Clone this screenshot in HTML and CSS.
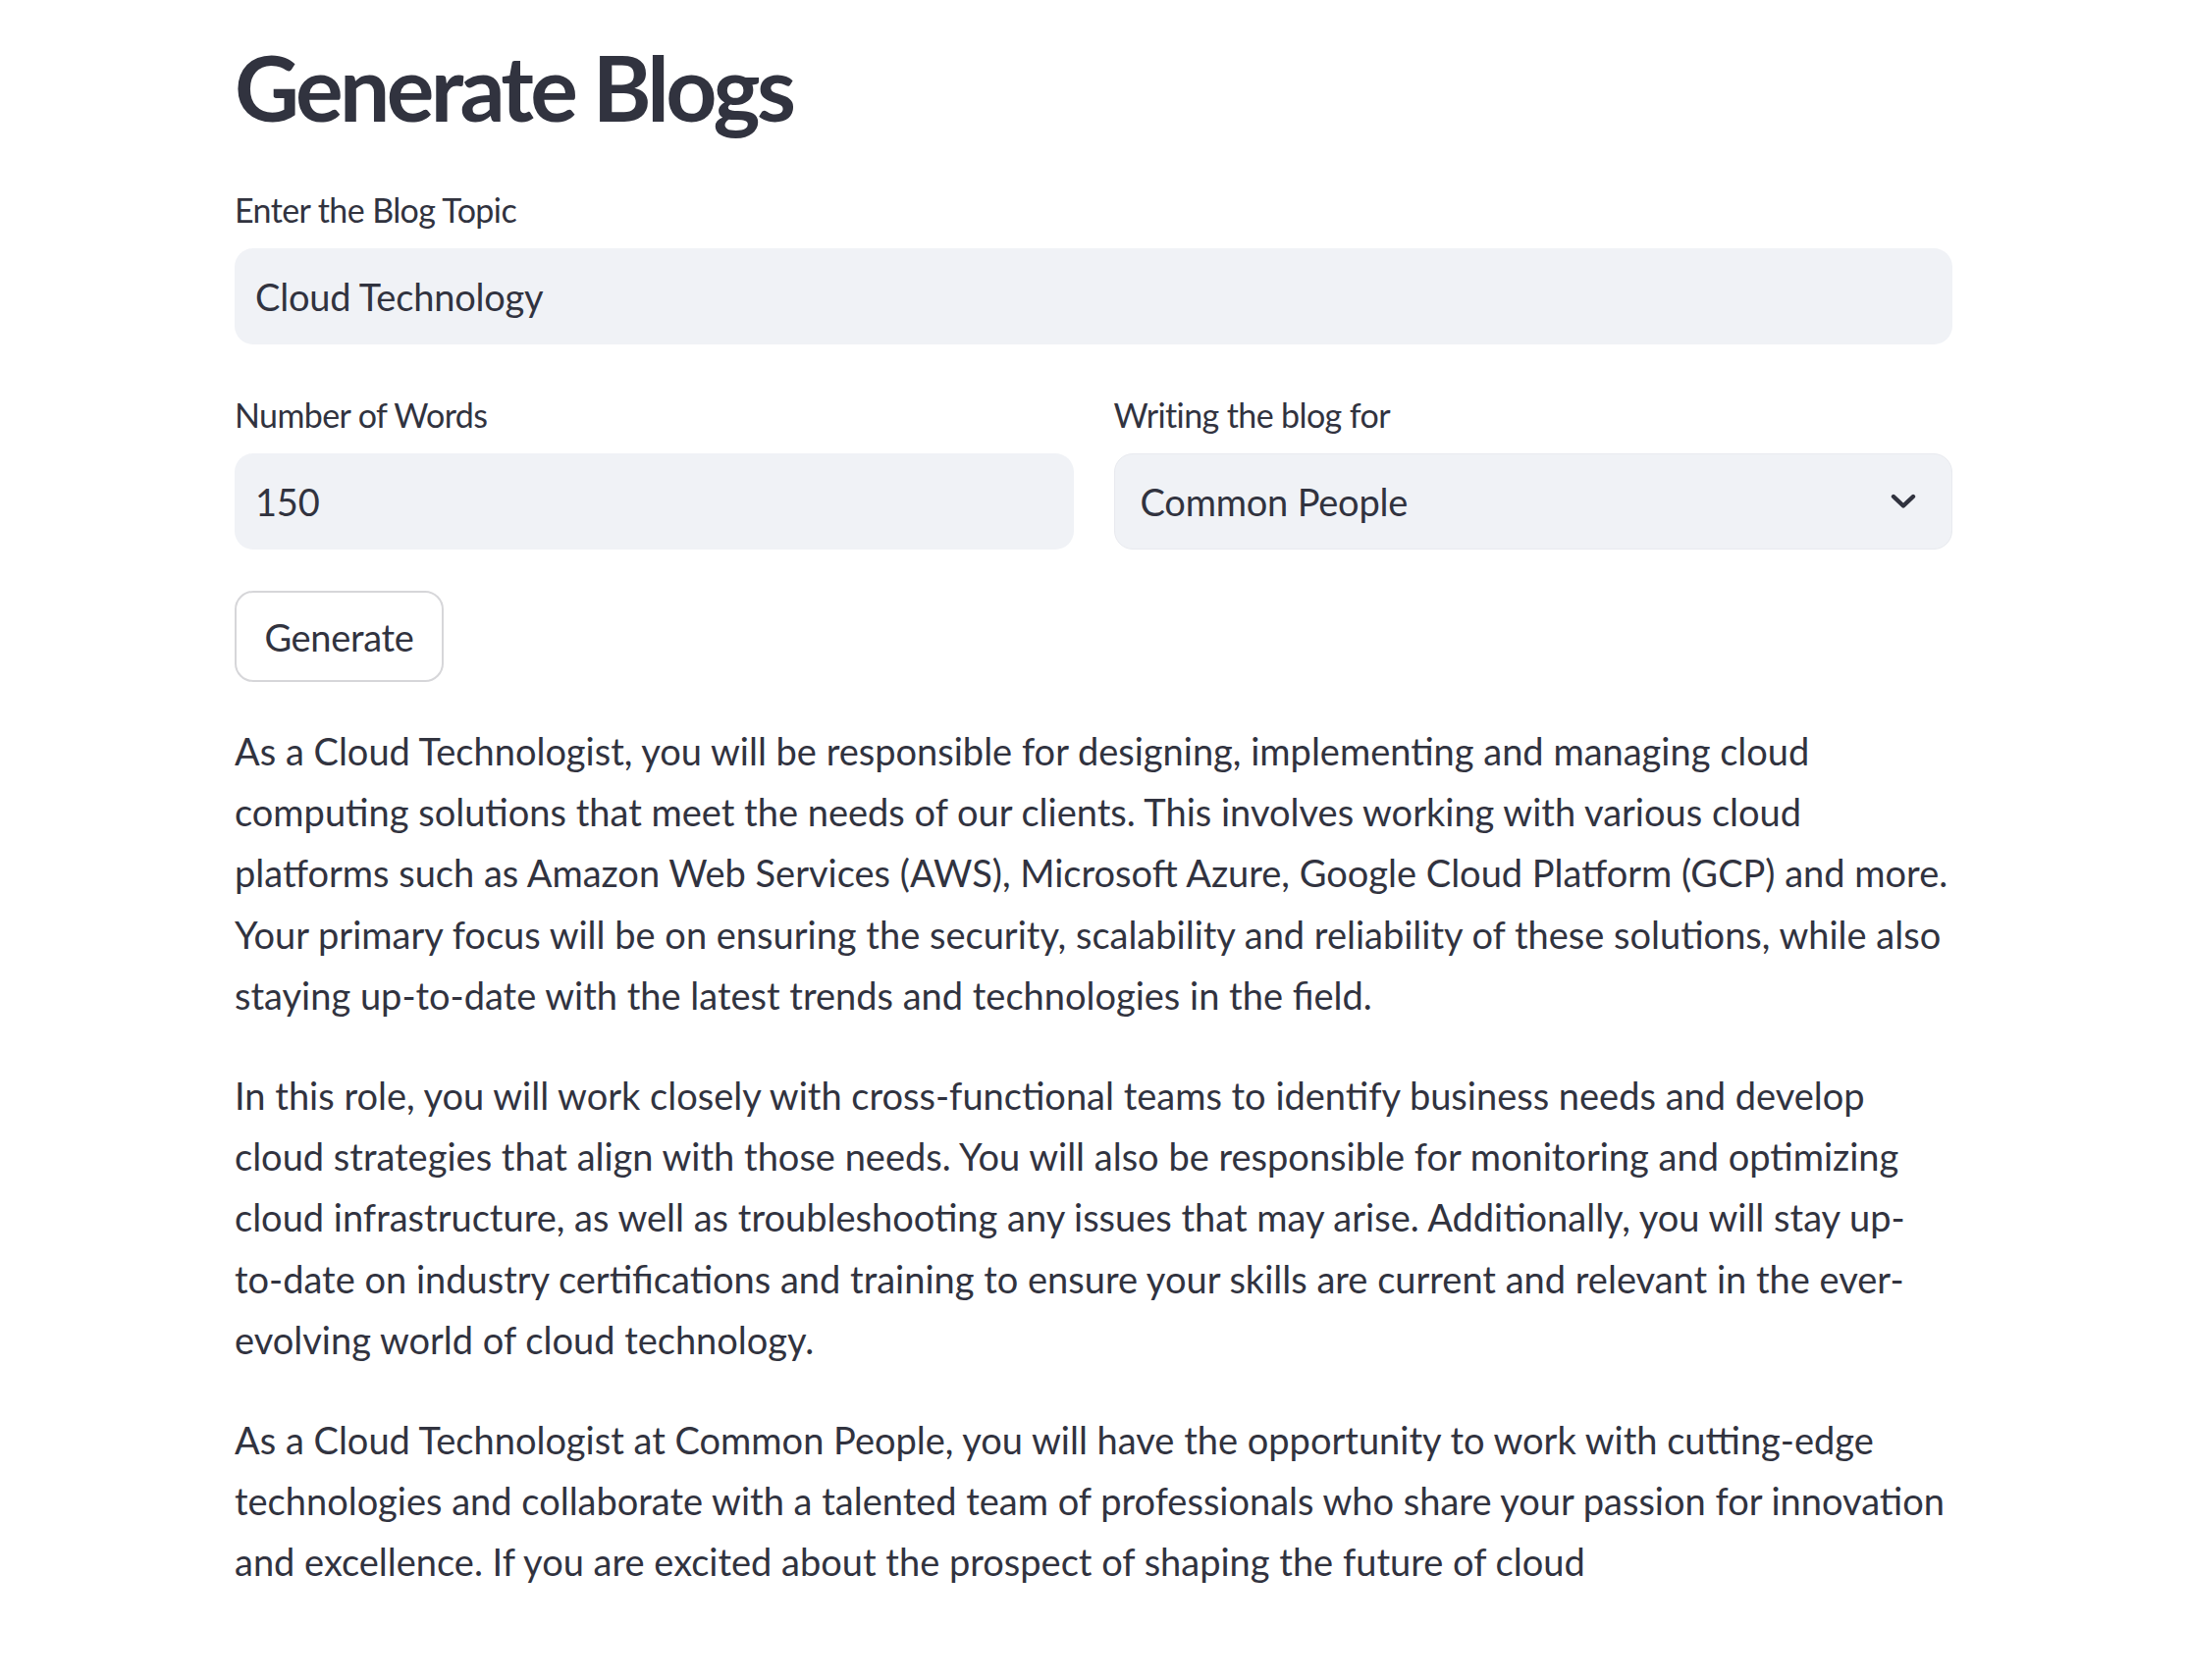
FILE: index.html
```html
<!DOCTYPE html>
<html lang="en">
<head>
<meta charset="utf-8">
<title>Generate Blogs</title>
<link rel="stylesheet" href="styles.css">
</head>
<body>
<main class="main">
  <h1 class="title">Generate Blogs</h1>

  <div class="field">
    <label class="label">Enter the Blog Topic</label>
    <div class="input"><span>Cloud Technology</span></div>
  </div>

  <div class="row">
    <div class="field col">
      <label class="label">Number of Words</label>
      <div class="input"><span>150</span></div>
    </div>
    <div class="field col">
      <label class="label">Writing the blog for</label>
      <div class="input select">
        <span>Common People</span>
        <svg class="chev" viewBox="0 0 26 16" width="26" height="16" aria-hidden="true">
          <path d="M3 3 L13 12.5 L23 3" fill="none" stroke="#31333F" stroke-width="4.4" stroke-linecap="round" stroke-linejoin="round"/>
        </svg>
      </div>
    </div>
  </div>

  <button class="btn">Generate</button>

  <div class="output">
    <p>As a Cloud Technologist, you will be responsible for designing, implementing and managing cloud computing solutions that meet the needs of our clients. This involves working with various cloud platforms such as Amazon Web Services (AWS), Microsoft Azure, Google Cloud Platform (GCP) and more. Your primary focus will be on ensuring the security, scalability and reliability of these solutions, while also staying up-to-date with the latest trends and technologies in the field.</p>
    <p>In this role, you will work closely with cross-functional teams to identify business needs and develop cloud strategies that align with those needs. You will also be responsible for monitoring and optimizing cloud infrastructure, as well as troubleshooting any issues that may arise. Additionally, you will stay up-to-date on industry certifications and training to ensure your skills are current and relevant in the ever-evolving world of cloud technology.</p>
    <p>As a Cloud Technologist at Common People, you will have the opportunity to work with cutting-edge technologies and collaborate with a talented team of professionals who share your passion for innovation and excellence. If you are excited about the prospect of shaping the future of cloud</p>
  </div>
</main>
</body>
</html>
```

FILE: styles.css
```css
html, body {
  margin: 0;
  padding: 0;
  background: #ffffff;
}

body {
  font-family: "Lato", "Open Sans", "Liberation Sans", sans-serif;
  color: #31333F;
}

.main {
  width: 1750px;
  margin-left: 239px;
  padding-top: 25px;
  display: flex;
  flex-direction: column;
}

.title {
  margin: 0;
  font-size: 91px;
  line-height: 128px;
  font-weight: 700;
  letter-spacing: -3.6px;
  color: #31333F;
}

.field {
  display: flex;
  flex-direction: column;
}

.main > .field {
  margin-top: 33px;
}

.label {
  display: block;
  height: 56px;
  line-height: 56px;
  font-size: 34px;
  margin-bottom: 11px;
  letter-spacing: -0.6px;
}

.input {
  height: 98px;
  box-sizing: border-box;
  background: #F0F2F6;
  border-radius: 19px;
  display: flex;
  align-items: center;
  padding-left: 21px;
  font-size: 38px;
  letter-spacing: -0.2px;
}

.row {
  display: grid;
  grid-template-columns: 1fr 1fr;
  column-gap: 41px;
  margin-top: 44px;
}

.select {
  padding-left: 26px;
  padding-right: 36px;
  justify-content: space-between;
  border: 1.5px solid #E8EAEF;
}

.chev {
  display: block;
}

.btn {
  align-self: flex-start;
  margin-top: 42px;
  width: 213px;
  height: 93px;
  box-sizing: border-box;
  background: #ffffff;
  border: 2.4px solid #D6D6D9;
  border-radius: 19px;
  font-family: inherit;
  font-size: 38px;
  color: #31333F;
  padding: 0;
  letter-spacing: -0.3px;
}

.output {
  margin-top: 39px;
}

.output p {
  margin: 0 0 40px 0;
  font-size: 38px;
  line-height: 62.2px;
  letter-spacing: 0;
}
```
